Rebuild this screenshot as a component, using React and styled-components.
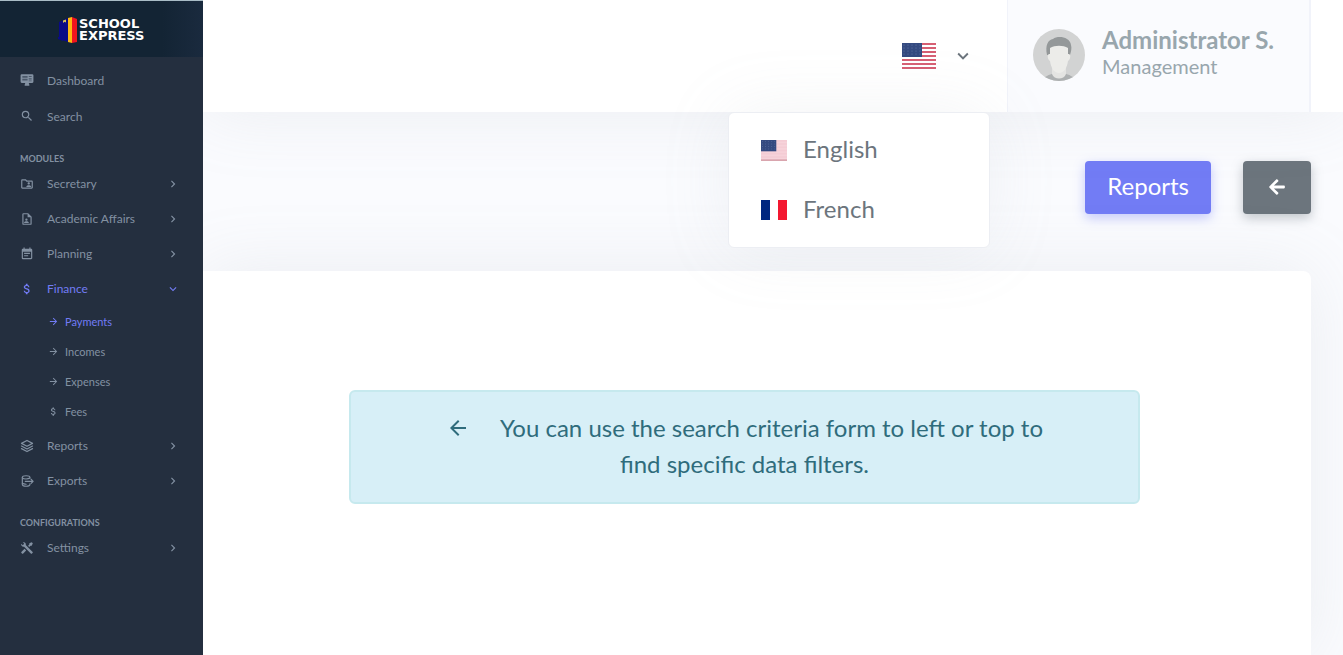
import React from "react";
import styled, { createGlobalStyle, css } from "styled-components";
import { FaArrowLeft } from "react-icons/fa";
import {
  MdSearch,
  MdOutlineFolderShared,
  MdEventNote,
  MdAttachMoney,
  MdArrowForward,
  MdArrowBack,
  MdChevronRight,
  MdExpandMore,
} from "react-icons/md";

const GlobalStyle = createGlobalStyle`
  *, *::before, *::after { box-sizing: border-box; }
  body {
    margin: 0;
    background: #fafbfe;
    color: #6c757d;
    font-family: Lato, "Noto Sans", sans-serif;
  }
  ul { list-style: none; margin: 0; padding: 0; }
  a { color: inherit; text-decoration: none; }
  button { font: inherit; border: 0; cursor: pointer; }
  svg { display: block; flex: none; }
`;

const Shell = styled.div`
  display: flex;
  min-height: 100vh;
`;

/* Sidebar */

const Sidebar = styled.aside`
  position: relative;
  z-index: 3;
  flex: none;
  width: 203px;
  background: #242f3f;
  color: #8391a2;
`;

const Brand = styled.a`
  display: flex;
  align-items: center;
  gap: 2px;
  height: 57px;
  padding: 2px 0 0 58px;
  border-top: 1px solid #a9bcc6;
  background: linear-gradient(90deg, #132434 80%, #1a2a3e);
`;

const BrandName = styled.span`
  color: #fff;
  font: 700 13px/12px "DejaVu Sans", sans-serif;
`;

const Nav = styled.nav`
  padding-top: 5px;
`;

const GroupTitle = styled.h2`
  margin: 0;
  padding: 17px 20px 0;
  font-size: 9px;
  line-height: 15px;
  font-weight: 700;
`;

const MenuLink = styled.a`
  display: flex;
  align-items: center;
  height: ${(p) => (p.$tall ? "36px" : "35px")};
  padding: 0 23px 0 20px;
  font-size: 12px;
  color: ${(p) => (p.$active ? "#727cf5" : "inherit")};
`;

const MenuIcon = styled.span`
  display: flex;
  justify-content: center;
  width: 14px;
  margin-right: 13px;
`;

const MenuLabel = styled.span`
  flex: 1;
`;

const SubMenu = styled.ul`
  padding-bottom: 2px;
`;

const SubLink = styled.a`
  display: flex;
  align-items: center;
  gap: 6px;
  height: 30px;
  padding-left: 48px;
  font-size: 11px;
  color: ${(p) => (p.$active ? "#727cf5" : "inherit")};
`;

/* Main column */

const Main = styled.div`
  flex: 1;
  min-width: 0;
  display: flex;
  flex-direction: column;
`;

const Topbar = styled.header`
  position: relative;
  z-index: 2;
  display: flex;
  justify-content: flex-end;
  height: 112px;
  padding-right: 32px;
  background: #fff;
  box-shadow: 0 0 70px rgba(154, 161, 171, 0.15);
`;

const Language = styled.div`
  position: relative;
  display: flex;
`;

const LanguageToggle = styled.button`
  display: flex;
  align-items: center;
  gap: 16px;
  padding: 0 33px 0 32px;
  background: none;
  color: #6c757d;
`;

const LanguageMenu = styled.ul`
  position: absolute;
  top: 112px;
  right: 17px;
  width: 262px;
  padding: 7px 0;
  border: 1px solid #eceef3;
  border-radius: 6px;
  background: #fff;
  box-shadow: 0 0 70px rgba(154, 161, 171, 0.12);
`;

const LanguageOption = styled.button`
  display: flex;
  align-items: center;
  gap: 16px;
  width: 100%;
  height: 60px;
  padding: 0 32px;
  background: none;
  color: #6c757d;
  font-size: 24px;
`;

const ButtonLabel = styled.span`
  padding-bottom: 3px;
`;

const Profile = styled.button`
  display: flex;
  align-items: center;
  gap: 17px;
  padding: 0 35px 2px 25px;
  border: 2px solid #f1f3fa;
  border-width: 0 2px 0 1px;
  background: #fafbfe;
  color: #98a6ad;
  text-align: left;
`;

const ProfileText = styled.span`
  padding-bottom: 6px;
`;

const ProfileName = styled.span`
  display: block;
  font-size: 24px;
  line-height: 27px;
  font-weight: 700;
`;

const ProfileRole = styled.span`
  display: block;
  font-size: 20px;
  line-height: 26px;
`;

const Content = styled.main`
  flex: 1;
  display: flex;
  flex-direction: column;
  padding-right: 32px;
`;

const Actions = styled.div`
  display: flex;
  justify-content: flex-end;
  gap: 32px;
  padding: 49px 0 57px;
`;

const actionTone = {
  primary: css`
    background: #727cf5;
    box-shadow: 0 4px 12px rgba(114, 124, 245, 0.4);
  `,
  secondary: css`
    background: #6c757d;
    box-shadow: 0 4px 12px rgba(108, 117, 125, 0.4);
  `,
};

const Action = styled.button`
  display: flex;
  align-items: center;
  justify-content: center;
  height: 53px;
  padding: 0 ${(p) => (p.$tone === "primary" ? "22px" : "25px")} 2px;
  border-radius: 4px;
  color: #fff;
  font-size: 24px;
  ${(p) => actionTone[p.$tone]}
`;

const Card = styled.section`
  flex: 1;
  padding: 119px 171px 40px 146px;
  border-radius: 0 8px 0 0;
  background: #fff;
  box-shadow: 0 0 70px rgba(154, 161, 171, 0.15);
`;

const Notice = styled.p`
  margin: 0;
  padding: 18px 80px 20px;
  border: 2px solid #c6e9ee;
  border-radius: 6px;
  background: #d7eff7;
  color: #2f6c7c;
  font-size: 24px;
  line-height: 36px;
  text-align: center;

  svg {
    display: inline-block;
    margin-right: 30px;
    vertical-align: -3px;
  }
`;

/* Drawings */

const LogoMark = () => (
  <svg width="19" height="26" viewBox="0 0 19 26" aria-hidden="true">
    <path d="M1 5 10 1v24L1 22z" fill="#0a0a86" />
    <path d="M0 20h5v4l-5-2z" fill="#0a0a86" />
    <path d="M5 3.500 8 2.500v3l-1.500-.8L5 6z" fill="#d8c05a" />
    <path d="M10 1 14 0v26l-4-1z" fill="#fdb813" />
    <path d="M14 0 19 2v23l-5 1z" fill="#f0141e" />
  </svg>
);

const DashboardIcon = () => (
  <svg width="14" height="14" viewBox="0 0 24 24" fill="currentColor" aria-hidden="true">
    <path d="M21 2H3a2 2 0 0 0-2 2v11a2 2 0 0 0 2 2h6l-1 3v2h8v-2l-1-3h6a2 2 0 0 0 2-2V4a2 2 0 0 0-2-2z" />
    <path d="M4 5h9v3H4zM15 5h5v2h-5zM15 9h5v2h-5zM4 10h9v3H4zM15 13h5v1h-5z" fill="#4b586a" />
  </svg>
);

const FileAccountIcon = () => (
  <svg width="14" height="14" viewBox="0 0 24 24" fill="currentColor" aria-hidden="true">
    <path d="M14 2H6a2 2 0 0 0-2 2v16a2 2 0 0 0 2 2h12a2 2 0 0 0 2-2V8l-6-6m4 18H6V4h7v5h5v11m-5-7a2 2 0 1 1-4 0 2 2 0 0 1 4 0m2 5v1H7v-1c0-1.330 2.670-2 4-2s4 .670 4 2z" />
  </svg>
);

const LayersIcon = () => (
  <svg width="14" height="14" viewBox="0 0 24 24" fill="none" stroke="currentColor" strokeWidth="2" strokeLinejoin="round" strokeLinecap="round" aria-hidden="true">
    <path d="M12 2.500 21.500 7.500 12 12.500 2.500 7.500z" />
    <path d="M2.500 12 12 17l9.500-5M2.500 16.500l9.500 5 9.500-5" />
  </svg>
);

const ExportIcon = () => (
  <svg width="14" height="14" viewBox="0 0 24 24" fill="none" stroke="currentColor" strokeWidth="2" strokeLinecap="round" strokeLinejoin="round" aria-hidden="true">
    <path d="M17 7V6c0-1.700-3-3-6.500-3S4 4.300 4 6v12c0 1.700 3 3 6.500 3s6.500-1.300 6.500-3v-1" />
    <path d="M4 6.500c1.500 1.700 4 2 6.500 2s4.500-.3 6.500-1.500M4 16c1.500 1 4 1.500 6.500 1.500" />
    <path d="M9 12.500h13.500M19 9l3.500 3.500L19 16" />
  </svg>
);

const ToolsIcon = () => (
  <svg width="14" height="14" viewBox="0 0 24 24" fill="currentColor" aria-hidden="true">
    <path d="M21.710 20.290 20.290 21.710a1 1 0 0 1-1.410 0L7 9.850A3.810 3.810 0 0 1 6 10 4 4 0 0 1 2.220 4.700L4.760 7.240 5.290 6.710 6.710 5.290 7.240 4.760 4.700 2.220A4 4 0 0 1 10 6a3.810 3.810 0 0 1-.15 1L21.710 18.880a1 1 0 0 1 0 1.410M2.290 18.880a1 1 0 0 0 0 1.410L3.710 21.710a1 1 0 0 0 1.410 0L10.590 16.250 7.760 13.420M20 2l-4 2v2l-2.170 2.170 2 2L18 8h2l2-4z" />
  </svg>
);

const UsFlag = ({ width, height, faded }) => (
  <svg width={width} height={height} viewBox="0 0 34 26" preserveAspectRatio="none" aria-hidden="true">
    <rect width="34" height="26" fill={faded ? "#f6d3da" : "#fff"} />
    {[0, 1, 2, 3, 4, 5, 6].map((i) => (
      <rect key={i} y={i * 4} width="34" height="2" fill={faded ? "#f4ccd4" : "#d65f73"} />
    ))}
    {faded && <rect y="24" width="34" height="2" fill="#d9a5ae" />}
    <rect width="20" height="14" fill="#344a80" />
    {[2, 5, 8, 11].map((y) =>
      [2, 6, 10, 14, 18].map((x) => (
        <circle key={`${x}-${y}`} cx={x} cy={y} r="0.600" fill="#6478a6" />
      ))
    )}
  </svg>
);

const FrenchFlag = () => (
  <svg width="26" height="20" viewBox="0 0 26 20" aria-hidden="true">
    <rect width="26" height="20" fill="#fff" />
    <rect width="9" height="20" fill="#00267f" />
    <rect x="17" width="9" height="20" fill="#f31830" />
  </svg>
);

const Avatar = () => (
  <svg width="52" height="52" viewBox="0 0 52 52" aria-hidden="true">
    <clipPath id="avatar-disc">
      <circle cx="26" cy="26" r="26" />
    </clipPath>
    <g clipPath="url(#avatar-disc)">
      <rect width="52" height="52" fill="#d2d3d3" />
      <path d="M10 52c1-5 6-6 11-8h10c5 2 10 3 11 8z" fill="#adb0b1" />
      <path d="M19 38h14v7c-2 6-12 6-14 0z" fill="#e4e4e2" />
      <path d="M14 26c-2-10 1-15 6-16 5-4 17-2 18 6 1 3 0 7-1 10z" fill="#949899" />
      <path d="M17 19c5-3 13-3 18 0v6c3-1 3 5 0 7-1 7-4 12-9 12s-8-5-9-12c-3-2-3-8 0-7z" fill="#ecece9" />
    </g>
  </svg>
);

/* Data */

const modules = [
  { label: "Secretary", icon: <MdOutlineFolderShared size={14} /> },
  { label: "Academic Affairs", icon: <FileAccountIcon /> },
  { label: "Planning", icon: <MdEventNote size={14} /> },
  {
    label: "Finance",
    icon: <MdAttachMoney size={14} />,
    active: true,
    children: [
      { label: "Payments", active: true, icon: <MdArrowForward size={11} /> },
      { label: "Incomes", icon: <MdArrowForward size={11} /> },
      { label: "Expenses", icon: <MdArrowForward size={11} /> },
      { label: "Fees", icon: <MdAttachMoney size={11} /> },
    ],
  },
  { label: "Reports", icon: <LayersIcon /> },
  { label: "Exports", icon: <ExportIcon /> },
];

const NavItem = ({ item, tall, plain }) => (
  <li>
    <MenuLink href="#" $active={item.active} $tall={tall}>
      <MenuIcon>{item.icon}</MenuIcon>
      <MenuLabel>{item.label}</MenuLabel>
      {!plain && (item.children ? <MdExpandMore size={14} /> : <MdChevronRight size={14} />)}
    </MenuLink>
    {item.children && (
      <SubMenu>
        {item.children.map((child) => (
          <li key={child.label}>
            <SubLink href="#" $active={child.active}>
              {child.icon}
              {child.label}
            </SubLink>
          </li>
        ))}
      </SubMenu>
    )}
  </li>
);

export default function App() {
  return (
    <>
      <GlobalStyle />
      <Shell>
        <Sidebar>
          <Brand href="#">
            <LogoMark />
            <BrandName>
              SCHOOL
              <br />
              EXPRESS
            </BrandName>
          </Brand>
          <Nav aria-label="Main">
            <ul>
              <NavItem plain tall item={{ label: "Dashboard", icon: <DashboardIcon /> }} />
              <NavItem plain tall item={{ label: "Search", icon: <MdSearch size={14} /> }} />
            </ul>
            <GroupTitle>MODULES</GroupTitle>
            <ul>
              {modules.map((item) => (
                <NavItem key={item.label} item={item} />
              ))}
            </ul>
            <GroupTitle>CONFIGURATIONS</GroupTitle>
            <ul>
              <NavItem item={{ label: "Settings", icon: <ToolsIcon /> }} />
            </ul>
          </Nav>
        </Sidebar>
        <Main>
          <Topbar>
            <Language>
              <LanguageToggle type="button" aria-label="Language" aria-expanded="true">
                <UsFlag width={34} height={26} />
                <MdExpandMore size={22} />
              </LanguageToggle>
              <LanguageMenu>
                <li>
                  <LanguageOption type="button">
                    <UsFlag width={26} height={21} faded />
                    <ButtonLabel>English</ButtonLabel>
                  </LanguageOption>
                </li>
                <li>
                  <LanguageOption type="button">
                    <FrenchFlag />
                    <ButtonLabel>French</ButtonLabel>
                  </LanguageOption>
                </li>
              </LanguageMenu>
            </Language>
            <Profile type="button">
              <Avatar />
              <ProfileText>
                <ProfileName>Administrator S.</ProfileName>
                <ProfileRole>Management</ProfileRole>
              </ProfileText>
            </Profile>
          </Topbar>
          <Content>
            <Actions>
              <Action type="button" $tone="primary">
                <ButtonLabel>Reports</ButtonLabel>
              </Action>
              <Action type="button" $tone="secondary" aria-label="Back">
                <FaArrowLeft size={18} />
              </Action>
            </Actions>
            <Card>
              <Notice>
                <MdArrowBack size={24} />
                You can use the search criteria form to left or top to find specific data filters.
              </Notice>
            </Card>
          </Content>
        </Main>
      </Shell>
    </>
  );
}
